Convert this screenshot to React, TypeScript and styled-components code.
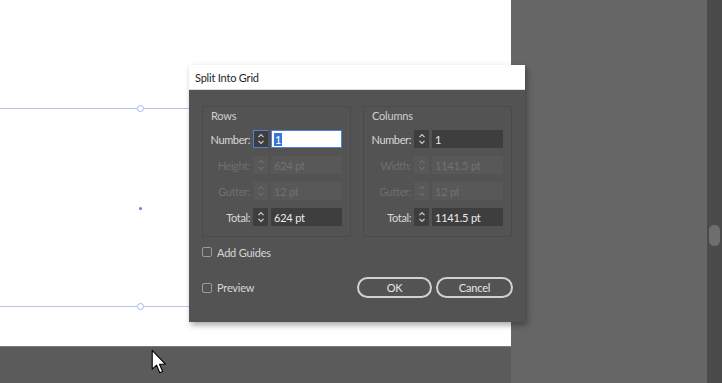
import React from "react";
import styled, { createGlobalStyle } from "styled-components";

const Global = createGlobalStyle`
  html, body { margin: 0; padding: 0; background: #666; }
  body { font-family: Lato, "Open Sans", "Liberation Sans", sans-serif; overflow: hidden; }
  * { box-sizing: border-box; }
`;

const Screen = styled.div`
  width: 722px;
  height: 383px;
  display: flex;
  overflow: hidden;
`;

const Workspace = styled.div`
  position: relative;
  flex: 1;
  display: flex;
  flex-direction: column;
  background: #666666;
`;

const CanvasRow = styled.div`
  display: flex;
  height: 346px;
`;

const Artboard = styled.div`
  position: relative;
  width: 511px;
  height: 100%;
  background: #ffffff;
`;

const BottomRow = styled.div`
  flex: 1;
  display: flex;
`;

const Pasteboard = styled.div`
  width: 511px;
  background: #5b5b5b;
  border-top: 1px solid #7a7a7a;
`;

const ScrollTrack = styled.div`
  width: 15px;
  background: #4b4b4b;
  padding-top: 225px;
  display: flex;
  justify-content: center;
`;

const ScrollThumb = styled.div`
  width: 11px;
  height: 21px;
  border-radius: 5px;
  background: #6e6e6e;
`;

const GuideLine = styled.div<{ $top: number }>`
  position: absolute;
  left: 0;
  top: ${(p) => p.$top}px;
  width: 189px;
  height: 1px;
  background: #b7c5ee;
`;

const Handle = styled.div<{ $top: number }>`
  position: absolute;
  left: 137px;
  top: ${(p) => p.$top - 3}px;
  width: 7px;
  height: 7px;
  border-radius: 50%;
  border: 1px solid #a9b9ea;
  background: #fff;
`;

const CenterDot = styled.div`
  position: absolute;
  left: 139px;
  top: 207px;
  width: 3px;
  height: 3px;
  border-radius: 50%;
  background: #5b7fd6;
`;

const Dialog = styled.div`
  position: absolute;
  left: 189px;
  top: 65px;
  width: 336px;
  height: 257px;
  display: flex;
  flex-direction: column;
  background: #535353;
  box-shadow: 2px 3px 6px rgba(0, 0, 0, 0.35);
`;

const TitleBar = styled.div`
  height: 25px;
  background: #ffffff;
  color: #1e1e1e;
  font-size: 11px;
  letter-spacing: -0.2px;
  display: flex;
  align-items: center;
  padding-left: 6px;
  border-bottom: 1px solid #dcdcdc;
`;

const Body = styled.div`
  flex: 1;
  display: flex;
  flex-direction: column;
  padding: 16px 13px 24px 13px;
`;

const Groups = styled.div`
  display: grid;
  grid-template-columns: 149px 149px;
  gap: 12px;
`;

const GroupBox = styled.div`
  height: 131px;
  border: 1px solid #4b4b4b;
  border-radius: 2px;
  padding: 2px 8px 0 6px;
  display: flex;
  flex-direction: column;
`;

const GroupTitle = styled.div`
  height: 14px;
  font-size: 11px;
  letter-spacing: -0.2px;
  color: #cfcfcf;
  line-height: 14px;
  padding-left: 2px;
  margin-bottom: 7px;
`;

const Rows = styled.div`
  display: flex;
  flex-direction: column;
  gap: 8px;
`;

const FieldRow = styled.div`
  display: grid;
  grid-template-columns: 41px 15px 1fr;
  column-gap: 3px;
  height: 18px;
  align-items: center;
`;

const Label = styled.div<{ $disabled?: boolean }>`
  font-size: 11px;
  letter-spacing: -0.4px;
  text-align: right;
  color: ${(p) => (p.$disabled ? "#6f6f6f" : "#d8d8d8")};
  white-space: nowrap;
`;

const Spinner = styled.div<{ $disabled?: boolean; $focus?: boolean }>`
  height: 18px;
  display: flex;
  align-items: center;
  justify-content: center;
  background: ${(p) => (p.$disabled ? "#585858" : "#3e3e3e")};
  border: 1px solid ${(p) => (p.$focus ? "#4a82de" : "transparent")};
  border-right: none;
  color: ${(p) => (p.$disabled ? "#6e6e6e" : "#d0d0d0")};
`;

const Field = styled.div<{ $disabled?: boolean; $focus?: boolean }>`
  height: 18px;
  display: flex;
  align-items: center;
  padding-left: 2px;
  font-size: 11px;
  letter-spacing: -0.2px;
  background: ${(p) => (p.$focus ? "#ffffff" : p.$disabled ? "#585858" : "#3e3e3e")};
  color: ${(p) => (p.$disabled ? "#727272" : "#ececec")};
  border: 1px solid ${(p) => (p.$focus ? "#4a82de" : "transparent")};
`;

const Selected = styled.span`
  background: #3a74d6;
  color: #ffffff;
  padding: 0 1px;
  line-height: 13px;
`;

const CheckRow = styled.label<{ $mt: number }>`
  display: flex;
  align-items: center;
  gap: 5px;
  margin-top: ${(p) => p.$mt}px;
  height: 10px;
  font-size: 11px;
  letter-spacing: -0.2px;
  color: #d6d6d6;
`;

const Box = styled.span`
  width: 10px;
  height: 10px;
  border: 1px solid #9a9a9a;
  border-radius: 2px;
`;

const Footer = styled.div`
  margin-top: 20px;
  height: 21px;
  display: flex;
  align-items: center;
  justify-content: space-between;
`;

const Buttons = styled.div`
  display: flex;
  gap: 4px;
  margin-right: -1px;
`;

const PillButton = styled.button<{ $w: number }>`
  width: ${(p) => p.$w}px;
  height: 21px;
  border-radius: 11px;
  border: 2px solid #d2d2d2;
  background: transparent;
  color: #e6e6e6;
  font-family: inherit;
  font-size: 11px;
  letter-spacing: -0.2px;
  padding: 0;
`;

const Cursor = styled.svg`
  position: absolute;
  left: 151px;
  top: 349px;
`;

const SpinGlyph = () => (
  <svg width="8" height="12" viewBox="0 0 8 12" fill="none" stroke="currentColor" strokeWidth="1.2">
    <path d="M1.5 4.2 L4 1.7 L6.5 4.2" />
    <path d="M1.5 7.8 L4 10.3 L6.5 7.8" />
  </svg>
);

type RowDef = { label: string; value: string; disabled?: boolean; focus?: boolean };

const Group = ({ title, rows }: { title: string; rows: RowDef[] }) => (
  <GroupBox>
    <GroupTitle>{title}</GroupTitle>
    <Rows>
      {rows.map((r) => (
        <FieldRow key={r.label}>
          <Label $disabled={r.disabled}>{r.label}</Label>
          <Spinner $disabled={r.disabled} $focus={r.focus}>
            <SpinGlyph />
          </Spinner>
          <Field $disabled={r.disabled} $focus={r.focus}>
            {r.focus ? <Selected>{r.value}</Selected> : r.value}
          </Field>
        </FieldRow>
      ))}
    </Rows>
  </GroupBox>
);

export default function App() {
  return (
    <Screen>
      <Global />
      <Workspace>
        <CanvasRow>
          <Artboard>
            <GuideLine $top={108} />
            <GuideLine $top={306} />
            <Handle $top={108} />
            <Handle $top={306} />
            <CenterDot />
          </Artboard>
        </CanvasRow>
        <BottomRow>
          <Pasteboard />
        </BottomRow>
        <Dialog>
          <TitleBar>Split Into Grid</TitleBar>
          <Body>
            <Groups>
              <Group
                title="Rows"
                rows={[
                  { label: "Number:", value: "1", focus: true },
                  { label: "Height:", value: "624 pt", disabled: true },
                  { label: "Gutter:", value: "12 pt", disabled: true },
                  { label: "Total:", value: "624 pt" },
                ]}
              />
              <Group
                title="Columns"
                rows={[
                  { label: "Number:", value: "1" },
                  { label: "Width:", value: "1141.5 pt", disabled: true },
                  { label: "Gutter:", value: "12 pt", disabled: true },
                  { label: "Total:", value: "1141.5 pt" },
                ]}
              />
            </Groups>
            <CheckRow $mt={10}>
              <Box />
              Add Guides
            </CheckRow>
            <Footer>
              <CheckRow $mt={0}>
                <Box />
                Preview
              </CheckRow>
              <Buttons>
                <PillButton $w={75}>OK</PillButton>
                <PillButton $w={77}>Cancel</PillButton>
              </Buttons>
            </Footer>
          </Body>
        </Dialog>
        <Cursor width="17" height="27" viewBox="0 0 14 22">
          <path
            d="M1 1 L1 16.5 L4.6 13.2 L7.2 19.4 L9.6 18.4 L7 12.4 L11.8 12.4 Z"
            fill="#ffffff"
            stroke="#000000"
            strokeWidth="0.9"
            strokeLinejoin="round"
          />
        </Cursor>
      </Workspace>
      <ScrollTrack>
        <ScrollThumb />
      </ScrollTrack>
    </Screen>
  );
}
